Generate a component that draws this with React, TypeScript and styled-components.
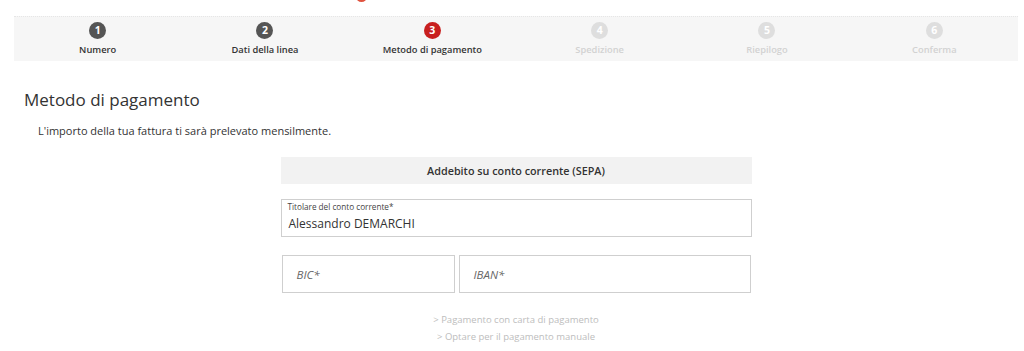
import React from "react";
import styled, { createGlobalStyle } from "styled-components";

const Global = createGlobalStyle`
  html, body { margin: 0; padding: 0; background: #fff; }
  body { font-family: "Open Sans", "Noto Sans", sans-serif; color: #333; }
  * { box-sizing: border-box; }
`;

const Page = styled.div`
  width: 1024px;
  height: 351px;
  overflow: hidden;
  position: relative;
`;

const LogoTip = styled.div`
  position: absolute;
  left: 356px;
  top: -9px;
  width: 11px;
  height: 11px;
  border-radius: 50%;
  background: #e0533f;
`;

const Container = styled.div`
  margin: 0 6px 0 14px;
  padding-top: 16px;
`;

const Stepper = styled.ol`
  list-style: none;
  margin: 0;
  padding: 0;
  display: grid;
  grid-template-columns: repeat(6, 1fr);
  height: 45px;
  background: #f6f6f6;
  border-top: 1px dotted #e6e6e6;
`;

const Step = styled.li`
  display: flex;
  flex-direction: column;
  align-items: center;
  padding-top: 5px;
`;

const Circle = styled.span<{ $state: "done" | "active" | "todo" }>`
  width: 17px;
  height: 17px;
  border-radius: 50%;
  display: flex;
  align-items: center;
  justify-content: center;
  font-size: 10.5px;
  font-weight: 700;
  color: #fff;
  line-height: 1;
  background: ${(p) =>
    p.$state === "active" ? "#c8201f" : p.$state === "done" ? "#555" : "#dedede"};
`;

const StepLabel = styled.span<{ $todo: boolean }>`
  margin-top: 5px;
  font-size: 9.3px;
  font-weight: 600;
  line-height: 12px;
  color: ${(p) => (p.$todo ? "#d2d2d2" : "#333")};
`;

const Main = styled.main`
  padding: 0 10px;
`;

const Title = styled.h1`
  margin: 26px 0 0;
  font-size: 17px;
  font-weight: 500;
  line-height: 26px;
  color: #333;
`;

const Intro = styled.p`
  margin: 10px 0 0 14px;
  font-size: 11px;
  line-height: 16px;
  color: #333;
`;

const Form = styled.div`
  width: 471px;
  margin: 18px auto 0;
`;

const SectionHead = styled.div`
  height: 27px;
  background: #f2f2f2;
  display: flex;
  align-items: center;
  justify-content: center;
  font-size: 10.8px;
  font-weight: 600;
  color: #333;
`;

const Field = styled.div`
  margin-top: 15px;
  height: 38px;
  border: 1px solid #cfcfcf;
  padding: 1px 6px 0;
  display: flex;
  flex-direction: column;
`;

const FieldLabel = styled.span`
  font-size: 8.2px;
  line-height: 11px;
  color: #444;
`;

const FieldValue = styled.span`
  font-size: 12px;
  line-height: 20px;
  margin-top: 2px;
  padding-left: 1px;
  color: #333;
`;

const Row = styled.div`
  margin-top: 18px;
  display: flex;
  gap: 4px;
  padding: 0 1px;
`;

const Box = styled.div<{ $w: number }>`
  width: ${(p) => p.$w}px;
  height: 38px;
  border: 1px solid #cfcfcf;
  display: flex;
  align-items: center;
  padding-left: 14px;
  font-size: 11.5px;
  font-style: italic;
  color: #666;
`;

const Links = styled.div`
  margin-top: 19px;
  display: flex;
  flex-direction: column;
  align-items: center;
  gap: 2px;
`;

const Alt = styled.a`
  font-size: 9.5px;
  line-height: 15px;
  color: #bdbdbd;
  text-decoration: none;
`;

const steps = [
  "Numero",
  "Dati della linea",
  "Metodo di pagamento",
  "Spedizione",
  "Riepilogo",
  "Conferma",
];

export default function App() {
  return (
    <Page>
      <Global />
      <LogoTip />
      <Container>
        <Stepper>
          {steps.map((s, i) => {
            const state = i < 2 ? "done" : i === 2 ? "active" : "todo";
            return (
              <Step key={s}>
                <Circle $state={state}>{i + 1}</Circle>
                <StepLabel $todo={state === "todo"}>{s}</StepLabel>
              </Step>
            );
          })}
        </Stepper>
        <Main>
          <Title>Metodo di pagamento</Title>
          <Intro>L'importo della tua fattura ti sarà prelevato mensilmente.</Intro>
        </Main>
        <Form>
          <SectionHead>Addebito su conto corrente (SEPA)</SectionHead>
          <Field>
            <FieldLabel>Titolare del conto corrente*</FieldLabel>
            <FieldValue>Alessandro DEMARCHI</FieldValue>
          </Field>
          <Row>
            <Box $w={173}>BIC*</Box>
            <Box $w={292}>IBAN*</Box>
          </Row>
          <Links>
            <Alt href="#">&gt; Pagamento con carta di pagamento</Alt>
            <Alt href="#">&gt; Optare per il pagamento manuale</Alt>
          </Links>
        </Form>
      </Container>
    </Page>
  );
}
